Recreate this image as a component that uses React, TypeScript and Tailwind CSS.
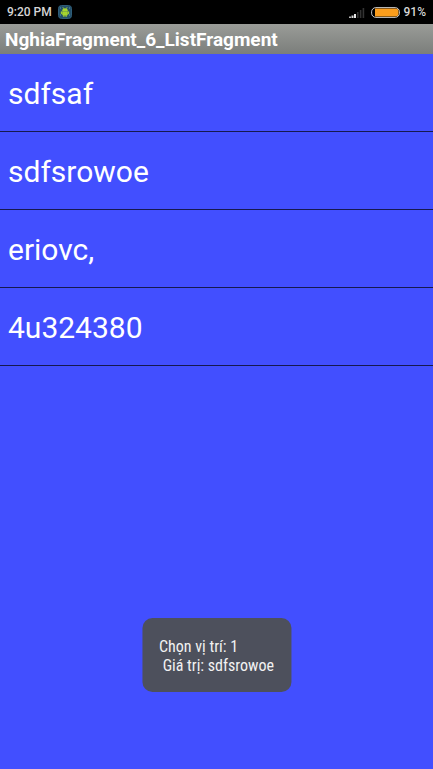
import React from "react";

const items = ["sdfsaf", "sdfsrowoe", "eriovc,", "4u324380"];

function DebugIcon() {
  return (
    <svg width="14" height="14" viewBox="0 0 14 14" aria-hidden="true">
      <rect x="0.5" y="0.5" width="13" height="13" rx="3" fill="#24506b" stroke="#2f5d78" />
      <path d="M2 3h1M2 10h1M11 3h1M11 10h1" stroke="#5d9bb8" />
      <path d="M4.2 6a2.8 2.8 0 0 1 5.6 0z" fill="#a6d52f" />
      <path d="M4.8 2.2l1 1.6M9.2 2.2l-1 1.6" stroke="#a6d52f" strokeWidth="0.8" />
      <path d="M4.2 6.2h5.6v3.4a.8.8 0 0 1-.8.8H5a.8.8 0 0 1-.8-.8z" fill="#a6d52f" />
      <path d="M3.4 6.8v1.8M10.6 6.8v1.8M5.9 10v1.5M8.1 10v1.5" stroke="#a6d52f" strokeWidth="1.1" strokeLinecap="round" />
    </svg>
  );
}

function SignalIcon() {
  return (
    <svg width="16" height="11" viewBox="0 0 16 11" aria-hidden="true">
      <rect x="0" y="9.5" width="2" height="1.5" fill="#b8b8b8" />
      <rect x="2.5" y="8.5" width="2" height="2.5" fill="#d8d8d8" />
      <rect x="5" y="7" width="2" height="4" fill="#e6e6e6" />
      <rect x="8" y="5" width="1.6" height="6" fill="#333" />
      <rect x="10.8" y="3" width="1.6" height="8" fill="#333" />
      <rect x="13.6" y="1" width="1.6" height="10" fill="#333" />
    </svg>
  );
}

function BatteryIcon() {
  return (
    <svg width="29" height="11" viewBox="0 0 29 11" aria-hidden="true">
      <rect x="0.6" y="0.6" width="27.8" height="9.8" rx="4.2" fill="#000" stroke="#c9c9c9" strokeWidth="1" />
      <path d="M4 1.6h20.5a3 3 0 0 1 3 3v1.8a3 3 0 0 1-3 3H4z" fill="#fb9d1c" />
    </svg>
  );
}

export default function App() {
  return (
    <div className="relative flex min-h-screen flex-col bg-[#424fff] font-[Roboto,sans-serif] text-white">
      <div className="flex h-6 items-center bg-black px-[7px] text-[12px] leading-4 font-medium text-[#d6d6d6]">
        <span className="mr-1.5">9:20 PM</span>
        <DebugIcon />
        <span className="ml-auto mr-1.5">
          <SignalIcon />
        </span>
        <BatteryIcon />
        <span className="ml-1">91%</span>
      </div>
      <header className="flex h-[30px] items-center bg-linear-to-b from-[#9a9c98] to-[#7b7e7b] px-[5px] pt-0.5">
        <h1 className="text-[19px] leading-6 font-bold">NghiaFragment_6_ListFragment</h1>
      </header>
      <ul>
        {items.map((item) => (
          <li key={item} className="border-b border-[#16194f]">
            <button type="button" className="block h-[77px] w-full px-2 pt-0.5 text-left text-[30px] leading-9">
              {item}
            </button>
          </li>
        ))}
      </ul>
      <div
        role="status"
        className="absolute bottom-[77px] left-1/2 -translate-x-1/2 rounded-[10px] bg-[#4d505c] px-[17px] pt-[19px] pb-[17px] font-['Roboto_Condensed',Roboto,sans-serif] text-[16px] leading-[19px] whitespace-pre text-[#f2f2f2]"
      >
        {"Chọn vị trí: 1\n Giá trị: sdfsrowoe"}
      </div>
    </div>
  );
}
